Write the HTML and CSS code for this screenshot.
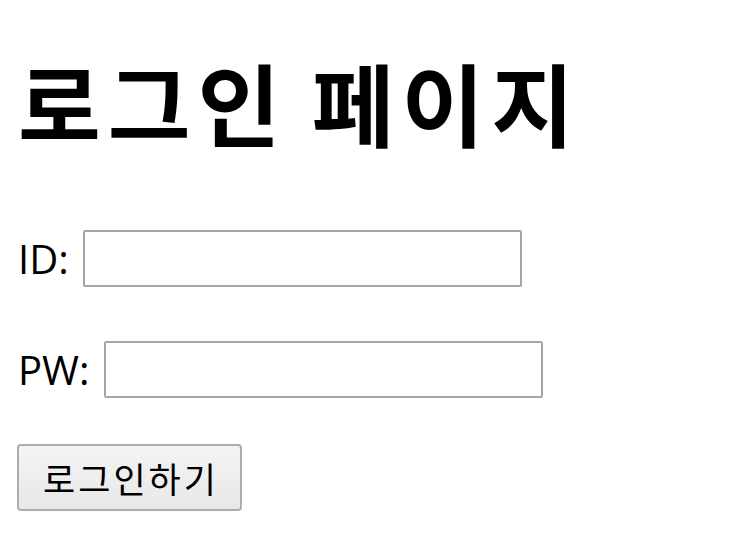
FILE: index.html
```html
<!DOCTYPE html>
<html lang="ko">
<head>
    <meta charset="UTF-8">
    <title>로그인 페이지</title>
    <link rel="stylesheet" href="styles.css">
</head>
<body>
    <h1>로그인 페이지</h1>
    <form class="login-form">
        <div class="form-row">
            <label for="userId">ID:</label>
            <input type="text" id="userId">
        </div>
        <div class="form-row">
            <label for="userPw">PW:</label>
            <input type="password" id="userPw">
        </div>
        <button type="submit">로그인하기</button>
    </form>
</body>
</html>
```

FILE: styles.css
```css
* {
    box-sizing: border-box;
}

body {
    margin: 0;
    padding: 0 18px;
    background: #ffffff;
    color: #000000;
    font-family: "Open Sans", "Noto Sans CJK KR", sans-serif;
}

h1 {
    font-family: "Noto Sans CJK KR", sans-serif;
    font-size: 90px;
    font-weight: 700;
    line-height: 96px;
    letter-spacing: 7px;
    word-spacing: -8px;
    margin: 53px 0 0;
}

.login-form {
    display: flex;
    flex-direction: column;
    align-items: flex-start;
    margin-top: 81px;
}

.form-row {
    display: flex;
    align-items: center;
    gap: 14px;
    margin-bottom: 54px;
}

label {
    font-size: 40px;
    line-height: 57px;
}

input {
    width: 439px;
    height: 57px;
    border: 2px solid #a6a6a6;
    border-radius: 2px;
    background: #ffffff;
    font-size: 33px;
    padding: 0 8px;
}

.form-row:nth-child(2) {
    margin-bottom: 46px;
}

button {
    width: 225px;
    height: 67px;
    border: 2px solid #adadad;
    border-radius: 4px;
    background: linear-gradient(#f4f4f4, #e8e8e8);
    font-family: "Noto Sans CJK KR", sans-serif;
    font-size: 35px;
    letter-spacing: 3px;
    color: #000000;
    padding: 0 0 0 3px;
    margin-left: -1px;
}
```
